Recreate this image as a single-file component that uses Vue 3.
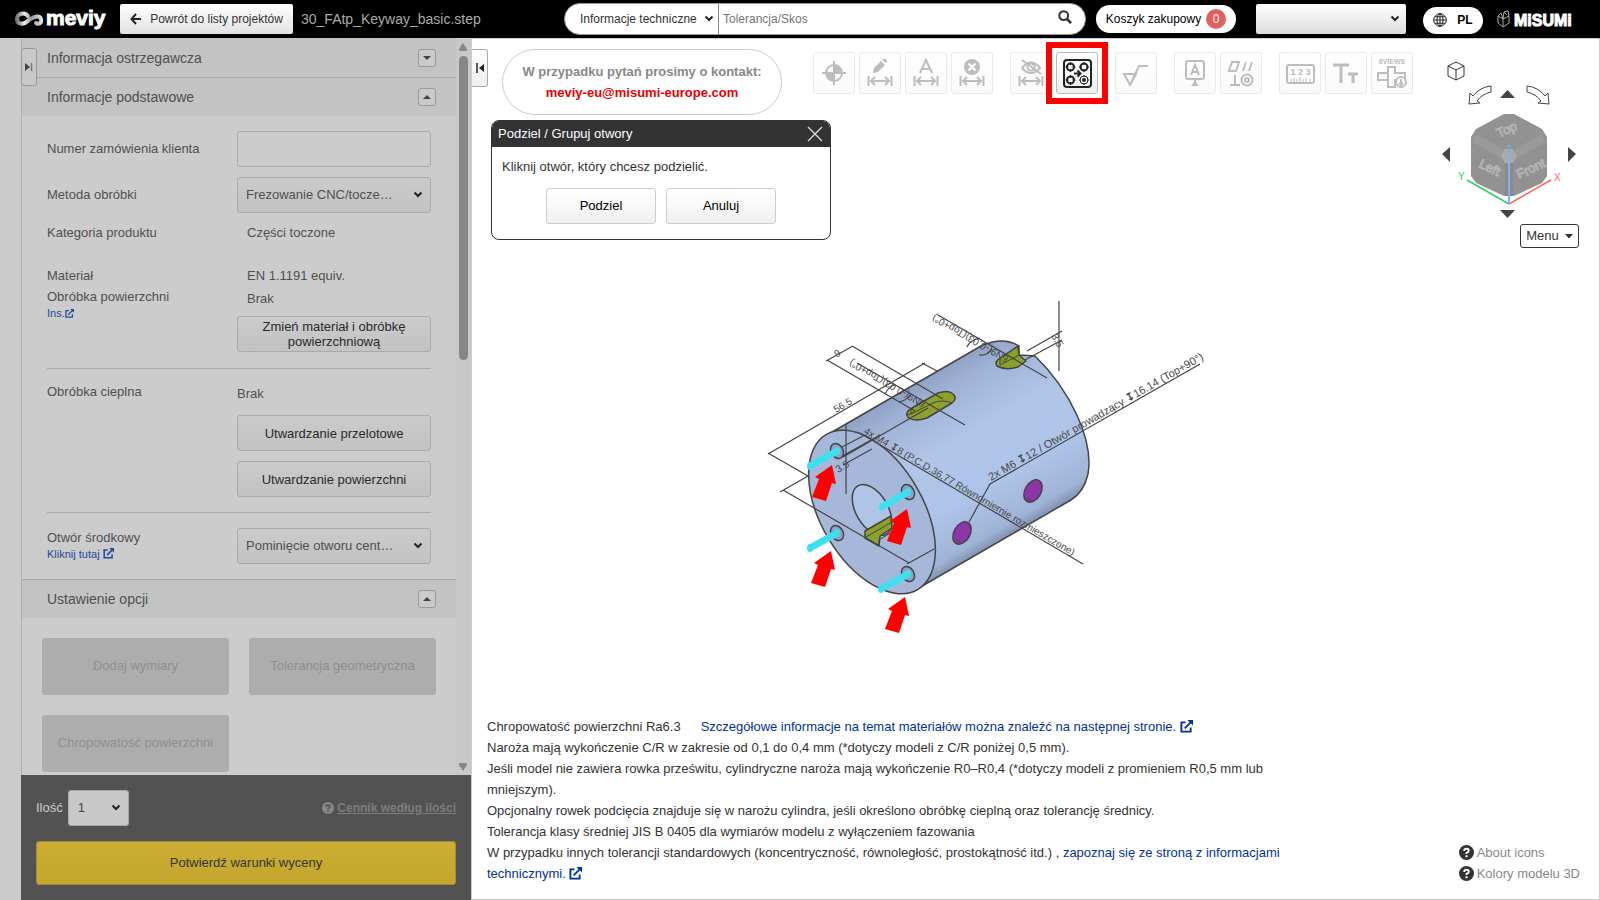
<script setup>
import { ref } from 'vue'

const tools = [
  ['datum', 'pencil', 'auto', 'remove'],
  ['hide', 'group'],
  ['rough'],
  ['label', 'geo'],
  ['ruler', 'text', 'views']
]
const names = {
  datum: 'Punkt bazowy', pencil: 'Dodaj wymiar', auto: 'Wymiar automatyczny', remove: 'Usuń wymiar',
  hide: 'Ukryj wymiary', group: 'Podziel / Grupuj otwory', rough: 'Chropowatość', label: 'Baza',
  geo: 'Tolerancja geometryczna', ruler: 'Pomiar', text: 'Tekst', views: '6 widoków'
}
const arrows = [[832, 465], [907, 509], [831, 551], [905, 597]]
const pins = [[810, 466, 837, 451], [882, 507, 908, 492], [810, 548, 837, 533], [881, 589, 908, 574]]
const order = ref('')
const search = ref('')
</script>

<template>
  <div class="app">
    <header class="bar">
      <svg class="logo" width="94" height="32" viewBox="14 3 94 32" role="img" aria-label="meviy">
        <defs>
          <linearGradient id="loop" x1="0" x2="1"><stop offset="0" stop-color="#777" /><stop offset=".3" stop-color="#eee" /><stop offset=".6" stop-color="#999" /><stop offset="1" stop-color="#ddd" /></linearGradient>
        </defs>
        <path d="M28 16C25 12 17 13 17 19C17 25 24 25 29 20C34 16 40 15 41 19C42 23 39 25 36 23" fill="none" stroke="url(#loop)" stroke-width="4" stroke-linecap="round" />
        <text x="46" y="25" class="brand">meviy</text>
      </svg>
      <button class="back">
        <svg width="12" height="12" viewBox="0 0 12 12"><path d="M6 1L1.500 6L6 11M2 6H11" fill="none" stroke="#222" stroke-width="2" /></svg>
        Powrót do listy projektów
      </button>
      <h1 class="file">30_FAtp_Keyway_basic.step</h1>
      <form class="search" @submit.prevent>
        <span class="pick kind">
          <select aria-label="Zakres wyszukiwania"><option>Informacje techniczne</option></select>
          <svg class="chev" viewBox="0 0 10 7"><path d="M1.500 1.500L5 5L8.500 1.500" /></svg>
        </span>
        <input v-model="search" type="text" placeholder="Tolerancja/Skos" aria-label="Szukaj">
        <button class="find" aria-label="Szukaj">
          <svg width="14" height="14" viewBox="0 0 16 16"><circle cx="6.500" cy="6.500" r="5" fill="none" stroke="#333" stroke-width="2.400" /><path d="M10 10L15 15" stroke="#333" stroke-width="3" /></svg>
        </button>
      </form>
      <button class="cart">Koszyk zakupowy <span class="badge">0</span></button>
      <span class="pick user">
        <select aria-label="Konto"><option></option></select>
        <svg class="chev" viewBox="0 0 10 7"><path d="M1.500 1.500L5 5L8.500 1.500" /></svg>
      </span>
      <button class="lang">
        <svg width="14" height="14" viewBox="0 0 14 14" fill="none" stroke="#222"><circle cx="7" cy="7" r="6.300" /><ellipse cx="7" cy="7" rx="3" ry="6.300" /><path d="M7 1V13M1 7H13M2 3.800H12M2 10.200H12" /></svg>
        PL
      </button>
      <svg class="misumi" width="78" height="22" viewBox="1496 8 78 22" role="img" aria-label="MiSUMi">
        <path d="M1498 16L1503 19L1509 16V23L1503 27L1498 23ZM1503 19V27M1498 16L1501 13L1503 19M1503 19L1504 12L1508 11L1509 16M1504 12L1507 15" fill="none" stroke="#aaa" />
        <text x="1514" y="26">MiSUMi</text>
      </svg>
    </header>

    <div class="body">
      <aside class="side">
        <div class="gutter"></div>
        <button class="tab tab-left" aria-label="Rozwiń panel"><svg width="8" height="10" viewBox="0 0 8 10"><path d="M0 1L5 5L0 9Z" fill="#444" /><path d="M6.500 1V9" stroke="#777" stroke-width="1.500" /></svg></button>
        <div class="panel">
          <div class="scroll">
            <div class="content">
              <div class="head lined"><h2>Informacja ostrzegawcza</h2><button class="fold" aria-label="Rozwiń"><svg viewBox="0 0 8 4"><path d="M0 0H8L4 4Z" /></svg></button></div>
              <div class="head"><h2>Informacje podstawowe</h2><button class="fold" aria-label="Zwiń"><svg viewBox="0 0 8 4"><path d="M0 4H8L4 0Z" /></svg></button></div>
              <div class="form">
                <div class="row"><label for="order">Numer zamówienia klienta</label><input id="order" v-model="order" type="text" class="box"></div>
                <div class="row"><label for="method">Metoda obróbki</label>
                  <span class="pick"><select id="method" class="box"><option>Frezowanie CNC/tocze…</option></select><svg class="chev" viewBox="0 0 10 7"><path d="M1.500 1.500L5 5L8.500 1.500" /></svg></span>
                </div>
                <div class="row short"><span>Kategoria produktu</span><span class="val">Części toczone</span></div>
                <div class="row material">
                  <div class="left"><p>Materiał</p><p>Obróbka powierzchni</p><a href="#">Ins.<svg class="ext" viewBox="0 0 14 14"><path d="M6 2.500H1.500V12.500H11.500V8M5 9L12 2" /><path class="tip" d="M8 0H14V6Z" /></svg></a></div>
                  <div class="right"><p class="val">EN 1.1191 equiv.</p><p class="val">Brak</p><button class="box">Zmień materiał i obróbkę powierzchniową</button></div>
                </div>
                <hr>
                <div class="row heat"><p>Obróbka cieplna</p>
                  <div class="stack"><p>Brak</p><button class="box">Utwardzanie przelotowe</button><button class="box">Utwardzanie powierzchni</button></div>
                </div>
                <hr>
                <div class="row centre">
                  <div><label for="centre">Otwór środkowy</label><a href="#">Kliknij tutaj <svg class="ext" viewBox="0 0 14 14"><path d="M6 2.500H1.500V12.500H11.500V8M5 9L12 2" /><path class="tip" d="M8 0H14V6Z" /></svg></a></div>
                  <span class="pick"><select id="centre" class="box"><option>Pominięcie otworu cent…</option></select><svg class="chev" viewBox="0 0 10 7"><path d="M1.500 1.500L5 5L8.500 1.500" /></svg></span>
                </div>
              </div>
              <div class="head topped"><h2>Ustawienie opcji</h2><button class="fold" aria-label="Zwiń"><svg viewBox="0 0 8 4"><path d="M0 4H8L4 0Z" /></svg></button></div>
              <div class="options">
                <button disabled>Dodaj wymiary</button><button disabled>Tolerancja geometryczna</button><button disabled>Chropowatość powierzchni</button>
              </div>
            </div>
            <div class="track">
              <svg width="10" height="8" viewBox="0 0 10 8"><path d="M5 0L9 6Q9.500 8 8 8H2Q0.500 8 1 6Z" fill="#868686" /></svg>
              <div class="rail"><div class="thumb"></div></div>
              <svg width="10" height="8" viewBox="0 0 10 8"><path d="M5 8L9 2Q9.500 0 8 0H2Q0.500 0 1 2Z" fill="#868686" /></svg>
            </div>
          </div>
          <div class="quote">
            <div class="qty">
              <label for="qty">Ilość</label>
              <span class="pick"><select id="qty"><option>1</option></select><svg class="chev" viewBox="0 0 10 7"><path d="M1.500 1.500L5 5L8.500 1.500" /></svg></span>
              <a href="#" class="price"><svg width="12" height="12" viewBox="0 0 14 14"><circle cx="7" cy="7" r="7" fill="#878787" /><path d="M4.800 5.500Q4.800 3.500 7 3.500T9.200 5.400Q9.200 6.500 7 7.300V8.500" fill="none" stroke="#525252" stroke-width="1.700" /><path d="M6 9.600H8V11.400H6Z" fill="#525252" /></svg><span>Cennik według ilości</span></a>
            </div>
            <button class="confirm">Potwierdź warunki wyceny</button>
          </div>
        </div>
      </aside>

      <main class="view">
        <svg class="model" width="460" height="350" viewBox="760 295 460 350" role="img" aria-label="Model 3D">
          <defs>
            <linearGradient id="skin" gradientUnits="userSpaceOnUse" x1="827" y1="435" x2="917" y2="589">
              <stop offset="0" stop-color="#8fa1c4" /><stop offset=".12" stop-color="#9fb2d6" /><stop offset=".4" stop-color="#b0c5e8" /><stop offset=".7" stop-color="#aec4e8" /><stop offset=".94" stop-color="#9fb3d6" /><stop offset="1" stop-color="#8293b2" />
            </linearGradient>
          </defs>
          <path class="edge" d="M827 435L981 346Q1003 336 1019 346L1019 355L1035 356C1070 390 1094 440 1088 474Q1084 492 1071 500L917 589Z" fill="url(#skin)" />
          <ellipse class="edge" cx="872" cy="512" rx="90" ry="51" transform="rotate(59.500 872 512)" fill="#a6b8da" />
          <path class="edge" fill="#8ba12b" d="M907 413Q908 410 912 408L938 393Q949 389 954 395Q957 399 952 403L927 418Q915 422 909 418Q906 416 907 413Z" />
          <path class="edge thin" d="M911 409V414L933 403Q942 399 952 403M908 415L914 412" />
          <path class="edge" fill="#8ba12b" d="M1000 358L1018 346L1019 355L1026 361L1018 367Q1006 371 997 366Q994 362 1000 358Z" />
          <path class="edge thin" d="M1000 358V365L1019 355" />
          <ellipse class="edge" cx="962" cy="533" rx="12" ry="8" transform="rotate(-60 962 533)" fill="#8d36a8" />
          <ellipse class="edge" cx="1033" cy="491" rx="12" ry="8" transform="rotate(-60 1033 491)" fill="#8d36a8" />
          <path class="edge thin" d="M956 539L961 542M1027 498L1032 501" />
          <ellipse class="edge" cx="872" cy="510" rx="28" ry="16" transform="rotate(59.500 872 510)" fill="#b0c4e6" />
          <path class="edge" fill="#8ba12b" d="M865 531L891 516L892 528L880 536L879 546L865 538Z" />
          <path class="edge thin" d="M866 537L892 522M879 546V540L892 532" />
          <g class="dims">
            <path d="M938 315L1047 378M852 346L943 399M827 360L915 411M853 346L826 361M857 363L965 425M768 454L925 363M922 363L937 371M768 453L808 476L780 492M783 490L909 563M907 564L934 549M846 424V494M843 457L928 408M840 448L865 435M843 465L872 449M839 458L880 435" />
            <path d="M860 433L1083 564M969 522L990 484L1200 364M1059 301V371M1027 351L1062 331M1025 360L1062 340" />
            <path d="M967 347Q970 340 980 338M979 355Q988 356 992 349M885 394Q889 386 895 385M899 402Q908 400 911 394" />
          </g>
          <g class="notes3d">
            <text transform="translate(863 433) rotate(30.400)">4x M4 <tspan class="sym">↧</tspan>8 (P.C.D.36.77 Równomiernie rozmieszczone)</text>
            <text transform="translate(991 481) rotate(-29.800)" class="wide">2x M6 <tspan class="sym">↧</tspan>12 / Otwór prowadzący <tspan class="sym">↧</tspan>16.14 (Top+90°)</text>
            <text transform="translate(836 413) rotate(-30)">56.5</text>
            <text transform="translate(838 349) rotate(150)">6</text>
            <text transform="translate(926 402) rotate(210)">6N9(-0.03)(Top+0°)</text>
            <text transform="translate(1009 357) rotate(210)">6N9(-0.03)(Top+0°)</text>
            <text transform="translate(838 473) rotate(-30)">3.5</text>
            <text transform="translate(1051 336) rotate(60)">3.5</text>
          </g>
          <g v-for="p in pins" :key="p.join()">
            <ellipse class="edge" :cx="p[2]" :cy="p[3]" rx="8" ry="6" :transform="`rotate(60 ${p[2]} ${p[3]})`" fill="#8fa1c6" />
            <line :x1="p[0]" :y1="p[1]" :x2="p[2]" :y2="p[3]" stroke="#40dff0" stroke-width="7" />
            <ellipse :cx="p[0]" :cy="p[1]" rx="3" ry="4" fill="#40dff0" />
            <ellipse :cx="p[2]" :cy="p[3]" rx="3" ry="4" fill="#40dff0" />
          </g>
          <path v-for="a in arrows" :key="a.join()" :transform="`translate(${a[0]} ${a[1]})`" d="M0 0L-17 12L-13 14L-20 32L-6 36L0 18L4 19Z" fill="#f00" />
        </svg>

        <button class="tab tab-right" aria-label="Zwiń panel"><svg width="8" height="10" viewBox="0 0 8 10"><path d="M8 1L3 5L8 9Z" fill="#222" /><path d="M1 0V10" stroke="#222" stroke-width="1.500" /></svg></button>

        <div class="top">
          <div class="contact">W przypadku pytań prosimy o kontakt:<a href="mailto:meviy-eu@misumi-europe.com">meviy-eu@misumi-europe.com</a></div>
          <div class="tools">
            <div v-for="(g, i) in tools" :key="i" class="group">
              <button v-for="t in g" :key="t" class="tool" :class="{ active: t === 'group' }" :aria-label="names[t]">
                <svg width="40" height="40" viewBox="1 1 40 40" class="ico">
                  <g v-if="t === 'datum'"><circle cx="21" cy="21" r="8" /><path d="M21 9V33M9 21H33" /><path class="f" d="M21 21H13A8 8 0 0 0 21 29ZM21 21V13A8 8 0 0 1 29 21Z" /></g>
                  <path v-if="['pencil', 'auto', 'remove', 'hide'].includes(t)" d="M9.500 24V34M32.500 24V34M12 29H30M16 25L12 29L16 33M26 25L30 29L26 33" />
                  <path v-if="t === 'pencil'" class="f" d="M14 21L15 16L22 9L26 13L19 20ZM23 8L24 7Q26 6 27.500 8T27 11Z" />
                  <path v-if="t === 'auto'" d="M15 21L21 8L27 21M17 17H25" />
                  <g v-if="t === 'remove'"><circle class="f" cx="21" cy="15" r="8" /><path class="w" d="M17.500 11.500L24.500 18.500M24.500 11.500L17.500 18.500" /></g>
                  <g v-if="t === 'hide'"><path d="M12 16Q21 5 30 16Q21 26 12 16M12 8L31 22" /><circle cx="21" cy="15" r="3.500" /></g>
                  <g v-if="t === 'group'" class="dark">
                    <rect x="8" y="8" width="27" height="27" rx="3" />
                    <circle cx="14.500" cy="15" r="3.500" /><circle cx="28" cy="15" r="3.500" /><circle cx="14.500" cy="28" r="3.500" /><circle class="thin" cx="28" cy="28" r="4" /><circle class="f" cx="28" cy="28" r="2" />
                    <path class="thin" d="M14.500 10V13M14.500 17V20M9.500 15H12.500M16.500 15H19.500M28 10V13M28 17V20M23 15H26M30 15H33M14.500 23V26M14.500 30V33M9.500 28H12.500M16.500 28H19.500M28 23V25M28 31V33M23 28H25M31 28H33" />
                    <path d="M18 21.500H24M21.500 18.500L24.500 21.500L21.500 24.500" />
                  </g>
                  <path v-if="t === 'rough'" d="M9 22H21L15 33ZM15 33L24 14H33" />
                  <g v-if="t === 'label'"><rect x="12" y="9" width="18" height="18" rx="2" /><path d="M17 23L21 13L25 23M18.500 20H23.500M21 27V30" /><path class="f" d="M21 29L25 34H17Z" /></g>
                  <g v-if="t === 'geo'"><path d="M12 10H19L16 19H9ZM26 10L23 19M32 10L29 19M15 23V33M10 33H20" /><circle cx="27" cy="28" r="5.500" /><circle cx="27" cy="28" r="2" /></g>
                  <g v-if="t === 'ruler'"><rect x="8" y="13" width="27" height="18" rx="2" /><path class="thin" d="M12 30V27M15 30V26M18 30V27M21 30V25M24 30V27M27 30V26M31 30V27" /><text x="21.500" y="23" class="digits">1 2 3</text></g>
                  <path v-if="t === 'text'" class="bold" d="M8 13H24M16 13V31M23 22H33M28 22V31" />
                  <g v-if="t === 'views'"><path d="M17 15H24V21H34V28H24V35H17V28H7V21H17ZM17 21V28" /><circle class="o" cx="30" cy="30" r="5" /><path d="M30 27V33M28 31L30 33L32 31" /><text x="21" y="12" class="six">6VIEWS</text></g>
                </svg>
              </button>
            </div>
          </div>
          <div class="orient">
            <svg width="142" height="166" viewBox="1438 56 142 166" role="img" aria-label="Orientacja widoku">
              <path d="M1448 66L1456 62L1464 66V76L1456 80L1448 76ZM1448 66L1456 70L1464 66M1456 70V80" fill="#fff" stroke="#333" />
              <path d="M1491 86V92Q1482 94 1477 101L1480 103L1469 104L1470 93L1473 96Q1480 87 1491 86Z" fill="#fff" stroke="#444" />
              <path d="M1527 86V92Q1536 94 1541 101L1538 103L1549 104L1548 93L1545 96Q1538 87 1527 86Z" fill="#fff" stroke="#444" />
              <path d="M1500 98L1507.500 90L1515 98ZM1500 210L1507.500 218L1515 210ZM1450 147V162L1442 154ZM1568 147V162L1576 154Z" fill="#444" />
              <path d="M1504 114H1514L1542 129L1547 137V176L1542 183L1514 196H1504L1476 183L1471 176V137L1476 129Z" fill="#929292" />
              <path d="M1476 134L1503 149L1502 159L1473 142ZM1542 134L1515 149L1516 159L1545 142Z" fill="#9a9a9a" />
              <path d="M1505 162H1513V196H1505Z" fill="#8a8a8a" />
              <path d="M1505 149H1513L1517 156L1513 163H1505L1501 156Z" fill="#aaa" />
              <text class="face" transform="translate(1499 138) rotate(-25)">Top</text>
              <text class="face" transform="translate(1478 167) rotate(25)">Left</text>
              <text class="face" transform="translate(1519 179) rotate(-25)">Front</text>
              <path d="M1509 204L1467 180" stroke="#3c6" stroke-width="1.500" /><path d="M1509 204L1551 180" stroke="#f66" stroke-width="1.500" /><path d="M1509 204V156" stroke="#7ab4f5" stroke-width="2" />
              <text class="ax" x="1458" y="180" fill="#3c6">Y</text><text class="ax" x="1554" y="181" fill="#f66">X</text><text class="ax" x="1506" y="153" fill="#6ab0ff">Z</text>
            </svg>
            <button class="menu">Menu <svg width="8" height="5" viewBox="0 0 8 5"><path d="M0 0H8L4 4.500Z" fill="#333" /></svg></button>
          </div>
        </div>

        <section class="dialog" role="dialog" aria-labelledby="dlg">
          <div class="dlg-head"><h2 id="dlg">Podziel / Grupuj otwory</h2><button aria-label="Zamknij"><svg width="16" height="16" viewBox="0 0 16 16"><path d="M1 1L15 15M15 1L1 15" stroke="#ddd" stroke-width="1.300" /></svg></button></div>
          <p>Kliknij otwór, który chcesz podzielić.</p>
          <div class="dlg-btns"><button>Podziel</button><button>Anuluj</button></div>
        </section>

        <div class="bottom">
          <div class="info">
            <p>Chropowatość powierzchni Ra6.3<a href="#" class="gap">Szczegółowe informacje na temat materiałów można znaleźć na następnej stronie. <svg class="ext" viewBox="0 0 14 14"><path d="M6 2.500H1.500V12.500H11.500V8M5 9L12 2" /><path class="tip" d="M8 0H14V6Z" /></svg></a></p>
            <p>Naroża mają wykończenie C/R w zakresie od 0,1 do 0,4 mm (*dotyczy modeli z C/R poniżej 0,5 mm).</p>
            <p>Jeśli model nie zawiera rowka prześwitu, cylindryczne naroża mają wykończenie R0–R0,4 (*dotyczy modeli z promieniem R0,5 mm lub mniejszym).</p>
            <p>Opcjonalny rowek podcięcia znajduje się w narożu cylindra, jeśli określono obróbkę cieplną oraz tolerancję średnicy.</p>
            <p>Tolerancja klasy średniej JIS B 0405 dla wymiarów modelu z wyłączeniem fazowania</p>
            <p>W przypadku innych tolerancji standardowych (koncentryczność, równoległość, prostokątność itd.) , <a href="#">zapoznaj się ze stroną z informacjami technicznymi. <svg class="ext" viewBox="0 0 14 14"><path d="M6 2.500H1.500V12.500H11.500V8M5 9L12 2" /><path class="tip" d="M8 0H14V6Z" /></svg></a></p>
          </div>
          <nav class="help">
            <a v-for="h in ['About icons', 'Kolory modelu 3D']" :key="h" href="#"><svg width="15" height="15" viewBox="0 0 14 14"><circle cx="7" cy="7" r="7" fill="#333" /><path d="M4.800 5.500Q4.800 3.500 7 3.500T9.200 5.400Q9.200 6.500 7 7.300V8.500" fill="none" stroke="#fff" stroke-width="1.700" /><path d="M6 9.600H8V11.400H6Z" fill="#fff" /></svg>{{ h }}</a>
          </nav>
        </div>
      </main>
    </div>
  </div>
</template>

<style>
html, body { margin: 0; background: #fff; }
</style>

<style scoped>
.app { height: 100vh; display: flex; flex-direction: column; overflow: hidden; font: 13px/18px "Liberation Sans", Arial, sans-serif; color: #333; }
.app *, .app { box-sizing: border-box; }
h1, h2, p { margin: 0; font-weight: normal; font-size: inherit; }
button, input, select { font: inherit; color: inherit; margin: 0; padding: 0; border: 0; background: none; border-radius: 0; outline: 0; }
select { appearance: none; width: 100%; height: 100%; }
a { color: #039; text-decoration: none; }
.pick { position: relative; display: block; }
.chev { position: absolute; right: 8px; top: 50%; width: 10px; height: 7px; margin-top: -4px; pointer-events: none; fill: none; stroke: #222; stroke-width: 2; }
.ext { width: 13px; height: 13px; vertical-align: -2px; fill: none; stroke: currentColor; stroke-width: 2; }
.ext .tip { fill: currentColor; stroke: none; }

.bar { flex: none; height: 38px; background: #000; display: flex; align-items: center; font-size: 12px; }
.logo { margin-left: 14px; flex: none; }
.brand { font: bold 21px "Liberation Sans", Arial, sans-serif; fill: #fff; stroke: #fff; stroke-width: 1; }
.back { margin-left: 12px; width: 173px; height: 30px; background: linear-gradient(#fff, #e2e2e2); border-radius: 2px; display: flex; align-items: center; justify-content: center; gap: 8px; }
.file { margin-left: 8px; font-size: 14px; color: #aaa; width: 263px; white-space: nowrap; }
.search { width: 522px; height: 32px; border: 1px solid #999; border-radius: 16px; background: #fff; display: flex; overflow: hidden; }
.kind { width: 154px; border-right: 1px solid #888; }
.kind select { padding-left: 15px; }
.kind .chev { right: 4px; }
.search input { flex: 1; min-width: 0; padding-left: 4px; }
.search input::placeholder { color: #757575; opacity: 1; }
.find { width: 40px; display: flex; align-items: center; justify-content: center; padding-bottom: 4px; }
.cart { margin-left: 10px; width: 140px; height: 28px; border-radius: 14px; background: #fff; color: #000; display: flex; align-items: center; justify-content: center; gap: 5px; white-space: nowrap; }
.badge { width: 20px; height: 20px; border-radius: 10px; background: #e06060; color: #fff; line-height: 20px; }
.user { margin-left: 20px; width: 150px; height: 30px; background: linear-gradient(#fff, #ddd); border-radius: 2px; }
.user .chev { right: 6px; }
.lang { margin-left: 17px; width: 60px; height: 27px; border-radius: 14px; background: #fff; color: #000; font-weight: bold; display: flex; align-items: center; justify-content: center; gap: 10px; margin-top: 2px; }
.misumi { margin-left: 13px; flex: none; }
.misumi text { font: bold 16px "Liberation Sans", Arial, sans-serif; fill: #fff; stroke: #fff; stroke-width: 1; }

.body { flex: 1; min-height: 0; display: flex; }
.side { width: 472px; flex: none; display: flex; position: relative; background: #ccc; border-right: 1px solid #ccc; color: #505050; }
.gutter { width: 21px; }
.panel { flex: 1; min-width: 0; display: flex; flex-direction: column; }
.scroll { flex: 1; min-height: 0; display: flex; overflow: hidden; border-left: 1px solid #b0b0b0; }
.content { flex: 1; overflow: hidden; }
.track { width: 15px; background: #c8c8c8; display: flex; flex-direction: column; align-items: center; padding: 5px 1px 4px 0; }
.rail { flex: 1; width: 9px; padding-top: 5px; }
.thumb { height: 43%; border-radius: 5px; background: #868686; }
.tab { position: absolute; z-index: 2; top: 10px; width: 16px; height: 38px; border: 1px solid #aaa; border-radius: 3px; display: flex; align-items: center; justify-content: center; }
.tab-left { left: 21px; background: #c8c8c8; border-color: #999; }
.tab-right { left: 0; background: linear-gradient(#fff, #eee); border-left: 0; border-radius: 0 3px 3px 0; }
.head { height: 38px; padding: 0 20px 0 25px; background: #c3c3c3; display: flex; align-items: center; justify-content: space-between; font-size: 14px; }
.lined { height: 40px; border-bottom: 1px solid #aaa; }
.topped { height: 39px; border-top: 1px solid #aaa; }
.fold { width: 18px; height: 18px; border: 1px solid #999; border-radius: 3px; background: #cacaca; display: flex; align-items: center; justify-content: center; }
.fold svg { width: 8px; height: 4px; fill: #444; }
.form { padding: 15px 25px; }
.row { display: grid; grid-template-columns: 190px 1fr; align-items: center; margin-bottom: 10px; }
.row p { line-height: 18px; }
.short { line-height: 20px; margin-bottom: 21px; }
.box { display: block; width: 100%; height: 36px; border: 1px solid #aaa; border-radius: 3px; background: linear-gradient(#cbcbcb, #c2c2c2); }
input.box { background: #ccc; padding: 0 8px; }
select.box { padding-left: 8px; }
button.box { color: #2a2a2a; line-height: 15px; }
.val { padding-left: 10px; }
.side .form a { display: block; font-size: 11px; line-height: 12px; color: #234a94; }
.left .ext { width: 9px; height: 9px; vertical-align: -1px; }
.centre .ext { width: 11px; height: 11px; vertical-align: -1px; }
.material, .heat, .centre { align-items: start; margin-bottom: 0; }
.material .left { padding-top: 1px; }
.material .left p { line-height: 21px; }
.material .right p { line-height: 23px; }
.material .right .box { margin-top: 6px; padding: 0 10px; }
hr { margin: 16px 0 14px; border: 0; border-top: 1px solid #aaa; }
.heat + hr { margin: 15px 0; }
.stack { display: grid; gap: 10px; padding-top: 1px; }
.stack p { padding: 1px 0 2px; }
.centre label { display: block; line-height: 20px; }
.options { display: grid; grid-template-columns: 1fr 1fr; gap: 20px; padding: 20px; }
.options button { height: 57px; border-radius: 3px; background: #adadad; color: #8f8f8f; white-space: nowrap; padding-bottom: 2px; }
.quote { background: #525252; padding: 15px; color: #ccc; }
.qty { display: flex; align-items: center; margin-bottom: 15px; }
.qty .pick { margin-left: 5px; width: 61px; height: 36px; }
.qty select { border: 1px solid #aaa; border-radius: 3px; background: #c8c8c8; color: #444; padding-left: 9px; }
.price { margin-left: auto; display: flex; align-items: center; gap: 3px; font-size: 12px; font-weight: bold; color: #7d7d7d; }
.price span { text-decoration: underline; }
.confirm { width: 100%; height: 44px; background: linear-gradient(#cbae33, #c4a52e); border: 1px solid #a58d34; border-radius: 3px; color: #333; }

.view { flex: 1; min-width: 0; position: relative; border: 1px solid #ccc; border-left: 0; display: flex; flex-direction: column; justify-content: space-between; }
.model { position: absolute; left: 288px; top: 256px; }
.edge { stroke: #444; stroke-width: 1.500; stroke-linejoin: round; }
.thin { stroke-width: 1; fill: none; }
.dims { fill: none; stroke: #444; stroke-width: 1.200; }
.notes3d { font: 10px "Liberation Sans", Arial, sans-serif; fill: #484848; }
.wide { font-size: 11px; }
.sym { font-family: "DejaVu Sans", sans-serif; font-weight: bold; }
.top { display: flex; position: relative; padding: 10px 19px 0 30px; align-items: flex-start; }
.contact { width: 280px; height: 66px; flex: none; border: 1px solid #ccc; border-radius: 33px; text-align: center; font-weight: bold; line-height: 21px; color: #888; padding-top: 11px; white-space: nowrap; }
.contact a { display: block; color: #e60000; }
.tools { display: flex; gap: 17px; margin: 3px 0 0 31px; flex: none; }
.group { display: flex; gap: 4px; }
.tool { width: 42px; height: 42px; border: 1px solid #eaeaea; border-radius: 3px; background: linear-gradient(#fff, #fafafa); }
.tool.active { position: relative; border-color: #bbb; background: linear-gradient(#fff, #eee); }
.tool.active::after { content: ""; position: absolute; inset: -11px; border: 6px solid #f00; }
.ico { display: block; fill: none; stroke: #bdbdbd; stroke-width: 2; }
.ico .f { fill: #bdbdbd; stroke: none; }
.ico .w { stroke: #fff; }
.ico .o { fill: #fff; }
.ico .bold { stroke-width: 3; }
.ico .thin { stroke-width: 1; }
.ico .dark { stroke: #222; }
.ico .dark .f { fill: #222; }
.digits, .six { stroke: none; fill: #bdbdbd; text-anchor: middle; font: bold 9px "Liberation Sans", sans-serif; }
.six { font-size: 7px; }
.orient { margin-left: auto; width: 142px; margin-top: 7px; display: flex; flex-direction: column; align-items: flex-end; gap: 2px; }
.face { font: 13px "Liberation Sans", sans-serif; fill: #999; stroke: #b4b4b4; stroke-width: 1; }
.ax { font: 10px "Liberation Sans", sans-serif; }
.menu { width: 59px; height: 24px; border: 1px solid #333; border-radius: 3px; background: #fff; display: flex; align-items: center; justify-content: center; gap: 6px; margin-right: 1px; }
.dialog { position: absolute; left: 19px; top: 81px; width: 340px; height: 120px; border: 1px solid #333; border-radius: 8px; background: #fff; overflow: hidden; }
.dlg-head { height: 26px; background: #333; color: #fff; display: flex; align-items: center; justify-content: space-between; padding: 0 7px 0 6px; }
.dlg-head button { height: 16px; display: flex; }
.dialog p { margin: 11px 10px 12px; }
.dlg-btns { display: flex; justify-content: center; gap: 10px; }
.dlg-btns button { width: 110px; height: 36px; border: 1px solid #ccc; border-radius: 3px; background: linear-gradient(#fff, #f0f0f0); color: #000; }
.bottom { position: relative; display: flex; justify-content: space-between; align-items: flex-end; padding: 0 19px 15px 15px; line-height: 21px; }
.info { width: 800px; }
.gap { margin-left: 20px; white-space: nowrap; }
.help a { display: flex; align-items: center; gap: 3px; color: #888; }
</style>
